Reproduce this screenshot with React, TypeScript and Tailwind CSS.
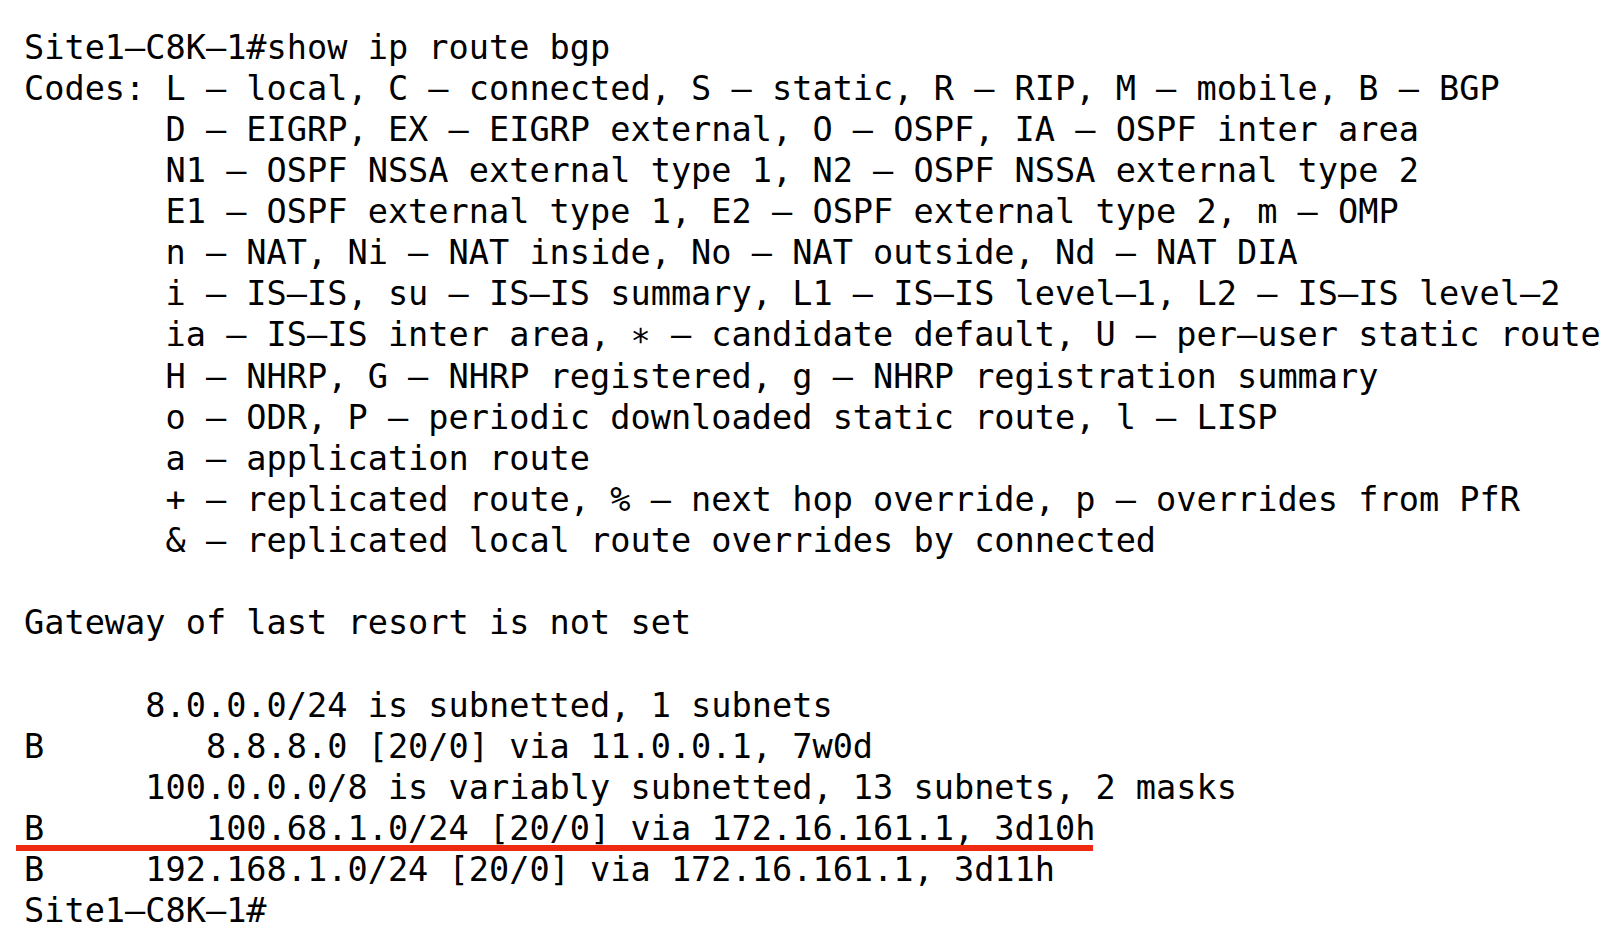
const lines: string[] = [
  'Site1–C8K–1#show ip route bgp',
  'Codes: L – local, C – connected, S – static, R – RIP, M – mobile, B – BGP',
  '       D – EIGRP, EX – EIGRP external, O – OSPF, IA – OSPF inter area',
  '       N1 – OSPF NSSA external type 1, N2 – OSPF NSSA external type 2',
  '       E1 – OSPF external type 1, E2 – OSPF external type 2, m – OMP',
  '       n – NAT, Ni – NAT inside, No – NAT outside, Nd – NAT DIA',
  '       i – IS–IS, su – IS–IS summary, L1 – IS–IS level–1, L2 – IS–IS level–2',
  '       ia – IS–IS inter area, ∗ – candidate default, U – per–user static route',
  '       H – NHRP, G – NHRP registered, g – NHRP registration summary',
  '       o – ODR, P – periodic downloaded static route, l – LISP',
  '       a – application route',
  '       + – replicated route, % – next hop override, p – overrides from PfR',
  '       & – replicated local route overrides by connected',
  '',
  'Gateway of last resort is not set',
  '',
  '      8.0.0.0/24 is subnetted, 1 subnets',
  'B        8.8.8.0 [20/0] via 11.0.0.1, 7w0d',
  '      100.0.0.0/8 is variably subnetted, 13 subnets, 2 masks',
  'B        100.68.1.0/24 [20/0] via 172.16.161.1, 3d10h',
  'B     192.168.1.0/24 [20/0] via 172.16.161.1, 3d11h',
  'Site1–C8K–1#',
];

// line that gets the red underline
const highlighted = 19;

export default function App() {
  return (
    <div className="min-h-screen w-full bg-white text-black">
      <div className="pt-[26.5px] pl-[24px] font-['DejaVu_Sans_Mono',monospace] text-[33.6px] leading-[41.14px]">
        {lines.map((line, i) => (
          <div key={i} className="relative h-[41.14px] whitespace-pre">
            {line}
            {i === highlighted && (
              <div className="absolute left-[-8px] top-[37px] h-[6px] w-[1077px] bg-[#ee2a10]" />
            )}
          </div>
        ))}
      </div>
    </div>
  );
}
